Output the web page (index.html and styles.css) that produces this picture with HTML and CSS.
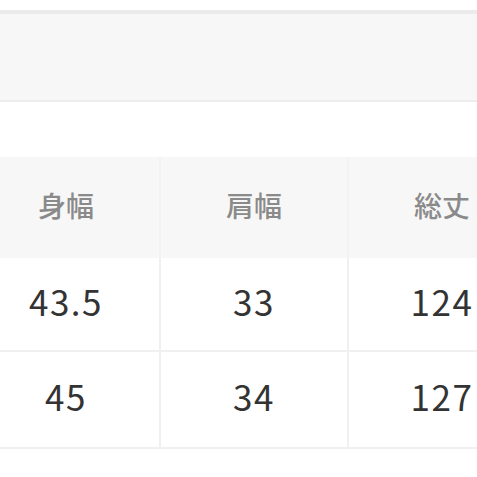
FILE: index.html
```
<!DOCTYPE html>
<html lang="ja">
<head>
<meta charset="utf-8">
<link rel="stylesheet" href="styles.css">
</head>
<body>
<div class="band"></div>
<div class="table-clip">
  <div class="size-table">
    <div class="cell head">身幅</div>
    <div class="cell head">肩幅</div>
    <div class="cell head">総丈</div>
    <div class="cell">43.5</div>
    <div class="cell">33</div>
    <div class="cell">124</div>
    <div class="cell">45</div>
    <div class="cell">34</div>
    <div class="cell">127</div>
  </div>
</div>
</body>
</html>
```

FILE: styles.css
```
html, body {
  margin: 0;
  padding: 0;
  background: #ffffff;
  overflow: hidden;
}
body {
  font-family: "Noto Sans CJK JP", "Noto Sans", sans-serif;
  padding-top: 10px;
}
.band {
  height: 86px;
  background: #f7f7f7;
  border-top: 4px solid #ebebeb;
  border-bottom: 2px solid #ededed;
}
.table-clip {
  margin-top: 55px;
  width: 100%;
  overflow: hidden;
}
.size-table {
  margin-left: -27px;
  width: 570px;
  display: grid;
  grid-template-columns: 188px 188px 188px;
  grid-template-rows: 101px 94px 97px;
}
.cell {
  display: flex;
  align-items: center;
  justify-content: center;
  border-right: 2px solid #f0f0f0;
  border-bottom: 2px solid #f0f0f0;
  font-size: 35px;
  letter-spacing: 1.5px;
  color: #333333;
  background: #ffffff;
  padding-bottom: 8px;
  box-sizing: border-box;
}
.cell.head {
  background: #f7f7f7;
  border-right-color: #f3f3f3;
  border-bottom: none;
  color: #8a8a8a;
  font-size: 28px;
  letter-spacing: 0;
  font-weight: 500;
  padding-bottom: 6px;
}
```
